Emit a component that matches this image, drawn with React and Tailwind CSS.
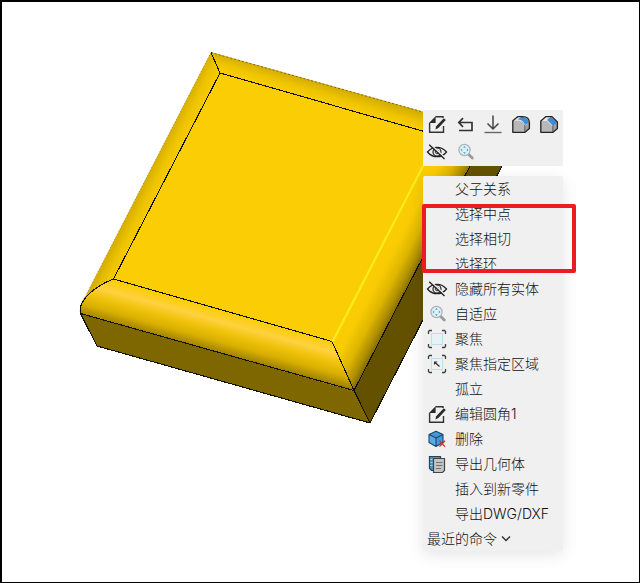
import React, { useState } from 'react';

const Icon = ({ children }) => (
    <svg viewBox="2 2 24 24" className="w-6 h-6 shrink-0" fill="none" aria-hidden="true">
        {children}
    </svg>
);

const EditIcon = () => (
    <Icon>
        <path d="M12.5 6.8H20V8M20.5 16V22.2H6.6V13" stroke="#333" strokeWidth="1.4" />
        <path d="M6 13L12.6 6.2V13Z" fill="#2b2b2b" />
        <path d="M20.8 8.2L22.8 10L15.4 18L12.4 19.4L13.2 16.2Z" fill="#2b2b2b" />
    </Icon>
);

const BackIcon = () => (
    <Icon>
        <path d="M8 20.5H21V12.5H8M12 8.2L7.8 12.5L12 16.8" stroke="#333" strokeWidth="1.7" />
    </Icon>
);

const DownIcon = () => (
    <Icon>
        <path d="M14 5.5V19M8.5 13.5L14 19L19.5 13.5" stroke="#444" strokeWidth="1.5" />
        <path d="M5.5 22.5H22.5" stroke="#666" strokeWidth="1.4" />
    </Icon>
);

const FilletIcon = () => (
    <Icon>
        <path d="M5.8 10.8L11 6.6H15.5C20 6.6 22.4 9 22.4 13V18.5L18 22.3H5.8Z" fill="#e8e8e8" />
        <path d="M5.8 10.8H11C15 10.8 17.8 13 17.8 17V22.3H5.8Z" fill="#b8b8b8" />
        <path d="M17.8 16V22.3L22.3 18.5V12.5Z" fill="#a0a0a0" />
        <path d="M10.500 9.500L14 7C18.500 6.800 21.800 9.500 21.800 13L18 15C17 11.500 14.500 9.500 10.500 9.500Z" fill="#3b8edb" />
        <path d="M5.8 10.8L11 6.6H15.5C20 6.6 22.4 9 22.4 13V18.5L18 22.3H5.8Z" stroke="#222" strokeWidth="1.3" strokeLinejoin="round" />
        <path d="M17.8 22V15" stroke="#444" strokeWidth="0.8" />
    </Icon>
);

const ChamferIcon = () => (
    <Icon>
        <path d="M5.8 11L11 6.6H17L22.4 12V18.5L18 22.3H5.8Z" fill="#e8e8e8" />
        <path d="M5.8 11H12L17.8 16.8V22.3H5.8Z" fill="#b8b8b8" />
        <path d="M17.8 16V22.3L22.3 18.5V12Z" fill="#a0a0a0" />
        <path d="M12.500 9.800L16 7.200L21.500 12.500L18 15.500Z" fill="#3b8edb" stroke="#245789" strokeWidth="0.5" />
        <path d="M5.8 11L11 6.6H17L22.4 12V18.5L18 22.3H5.8Z" stroke="#222" strokeWidth="1.3" strokeLinejoin="round" />
        <path d="M17.8 22V15.5" stroke="#444" strokeWidth="0.8" />
    </Icon>
);

const HideIcon = () => (
    <Icon>
        <path d="M4.5 14C7 11 10 9.3 14 9.3S21 11 23.5 14C21 17 18 18.7 14 18.7S7 17 4.5 14Z" stroke="#222" strokeWidth="1.3" />
        <circle cx="14" cy="14" r="4" stroke="#222" strokeWidth="1.2" />
        <circle cx="14" cy="14" r="1.8" stroke="#333" strokeWidth="0.9" />
        <path d="M7.5 6.2L22.8 20.4" stroke="#f0f0f0" strokeWidth="1.4" />
        <path d="M6.2 6.8L21.5 21" stroke="#222" strokeWidth="1.4" />
    </Icon>
);

const ZoomFitIcon = () => (
    <Icon>
        <path d="M17.2 16L21.3 20" stroke="#9a9a9a" strokeWidth="2.8" strokeLinecap="round" />
        <circle cx="13.5" cy="12" r="5.6" fill="#dcf1fa" stroke="#a9b2b7" strokeWidth="1.2" />
        <path d="M13.500 8L14.900 9.700H12.100ZM13.500 16L12.100 14.300H14.900ZM9.500 12L11.200 10.600V13.400ZM17.500 12L15.800 13.400V10.600Z" fill="#5f9ab5" />
    </Icon>
);

const FocusFrame = () => (
    <>
        <path d="M5.500 9V6.500L6.500 5.500H9M19 5.500H21.500L22.500 6.500V9M22.500 19V21.500L21.500 22.500H19M9 22.500H6.500L5.500 21.500V19" stroke="#3d3d3d" strokeWidth="1.3" />
        <rect x="8.5" y="8.5" width="11" height="11" stroke="#8ccbed" strokeDasharray="1 1" />
    </>
);

const FocusIcon = () => (
    <Icon>
        <FocusFrame />
        <rect x="9" y="9" width="10" height="10" fill="#e8f1f5" />
    </Icon>
);

const FocusAreaIcon = () => (
    <Icon>
        <FocusFrame />
        <path d="M11 11.500H14.500L11 15Z" fill="#333" />
        <path d="M12 12.500L16.500 16.500" stroke="#333" strokeWidth="1.3" />
    </Icon>
);

const DeleteIcon = () => (
    <Icon>
        <path d="M13 6.300L20 9.500V17.500L13 21.500L6 17.500V9.500Z" fill="#4298dc" />
        <path d="M13 13V21.500L6 17.500V9.500Z" fill="#5aaaea" />
        <path d="M13 6.300L20 9.500V17.500L13 21.500L6 17.500V9.500ZM6 9.500L13 13L20 9.500M13 13V21.500" stroke="#1f4564" strokeWidth="1.1" strokeLinejoin="round" />
        <path d="M16.500 15.800L22 21.600M22 15.800L16.500 21.600" stroke="#d92b2b" strokeWidth="1.3" />
    </Icon>
);

const ExportIcon = () => (
    <Icon>
        <path d="M6.500 6.500H17.500V20.500H8.500L6.500 18.500Z" fill="#4a94c6" stroke="#23425a" strokeWidth="1.2" />
        <path d="M7.200 9.500H9.500M7.200 12.500H9.500M7.200 15.500H9.500" stroke="#a7d0ea" />
        <path d="M10.500 8.500H21.500V20.500L19.500 22.500H10.500Z" fill="#c4c4c4" stroke="#444" strokeWidth="1.2" />
        <path d="M13 12.500H19.500M13 15.500H19.500M13 18.500H18" stroke="#6a6a6a" strokeWidth="0.9" />
    </Icon>
);

const tools = [
    { label: '编辑特征', icon: EditIcon },
    { label: '回退', icon: BackIcon },
    { label: '退回到前', icon: DownIcon },
    { label: '圆角', icon: FilletIcon },
    { label: '倒角', icon: ChamferIcon },
    { label: '隐藏', icon: HideIcon },
    { label: '自适应', icon: ZoomFitIcon },
];

const menuItems = [
    { label: '父子关系' },
    { label: '选择中点' },
    { label: '选择相切' },
    { label: '选择环' },
    { label: '隐藏所有实体', icon: HideIcon },
    { label: '自适应', icon: ZoomFitIcon },
    { label: '聚焦', icon: FocusIcon },
    { label: '聚焦指定区域', icon: FocusAreaIcon },
    { label: '孤立' },
    { label: '编辑圆角1', icon: EditIcon },
    { label: '删除', icon: DeleteIcon },
    { label: '导出几何体', icon: ExportIcon },
    { label: '插入到新零件' },
    { label: '导出DWG/DXF' },
];

const Model = () => (
    <svg viewBox="0 0 640 583" className="absolute left-0 top-0 w-[640px] h-[583px]" fill="none" aria-hidden="true">
        <defs>
            <linearGradient id="left" gradientUnits="userSpaceOnUse" x1="146" y1="178" x2="166" y2="188">
                <stop offset="0" stopColor="#d6ae00" />
                <stop offset="0.45" stopColor="#eec400" />
                <stop offset="1" stopColor="#fbcd04" />
            </linearGradient>
            <linearGradient id="back" gradientUnits="userSpaceOnUse" x1="318" y1="83" x2="313" y2="100">
                <stop offset="0" stopColor="#d6ae00" />
                <stop offset="0.5" stopColor="#eec400" />
                <stop offset="1" stopColor="#fbcd04" />
            </linearGradient>
            <linearGradient id="front" gradientUnits="userSpaceOnUse" x1="222" y1="310" x2="211" y2="350">
                <stop offset="0" stopColor="#fbcd04" />
                <stop offset="0.28" stopColor="#ffd140" />
                <stop offset="0.5" stopColor="#f0c30c" />
                <stop offset="0.75" stopColor="#d9b000" />
                <stop offset="1" stopColor="#a08200" />
            </linearGradient>
            <linearGradient id="right" gradientUnits="userSpaceOnUse" x1="380" y1="249" x2="418" y2="269">
                <stop offset="0" stopColor="#fbcd04" />
                <stop offset="0.3" stopColor="#f8cb04" />
                <stop offset="0.6" stopColor="#dfb600" />
                <stop offset="0.85" stopColor="#ad8d00" />
                <stop offset="1" stopColor="#806800" />
            </linearGradient>
        </defs>
        <path d="M80 313L354 391L370 423L97 346Z" fill="#7f6700" />
        <path d="M354 391L495 117L527 117L370 423Z" fill="#645100" />
        <path d="M211 52L220 73L113 279Q88 290 80 308Q80 303 86 295Z" fill="url(#left)" />
        <path d="M211 52L460 122L440 136L220 73Z" fill="url(#back)" />
        <path d="M220 73L440 136L332 341L113 279Z" fill="#fbcd04" />
        <path d="M113 279L332 341L354 391L80 313C78 302 91 288 113 279Z" fill="url(#front)" />
        <path d="M332 341L440 134L494 119L354 391Z" fill="url(#right)" />
        <g stroke="#111100" strokeWidth="1.1" strokeLinejoin="round" shapeRendering="crispEdges">
            <path d="M211 52.5L220 73L113.500 279L332 341.500L354 390.500L370 423L97 346L80.500 313.500L354 390.500L470 166" />
            <path d="M220 73L440 136M113.500 279C91 288 78 302 80.500 313.500M370 423L502 166" />
        </g>
        <path d="M211 52.500L423 112" stroke="#3a3000" strokeDasharray="2 2" strokeWidth="0.6" />
        <path d="M211 52.500L86 295" stroke="#6b5800" strokeWidth="0.5" strokeDasharray="1 2" />
        <path d="M332.500 342L423 166" stroke="#faec19" strokeWidth="2.2" />
    </svg>
);

const App = () => {
    const [isRecentOpen, setIsRecentOpen] = useState(false);

    return (
        <main className="relative h-screen overflow-hidden bg-white border-black border-t-2 border-l-2 border-r border-b font-[Inter,'Noto_Sans_CJK_SC',sans-serif] text-sm font-light text-[#111]">
            <div className="absolute -left-0.5 -top-0.5">
                <Model />

                <div className="absolute left-[423px] top-[110px] w-[140px] bg-[#f0f0f0] grid grid-cols-5">
                    {tools.map(({ label, icon: ToolIcon }) => (
                        <button key={label} aria-label={label} className="w-7 h-7 flex items-center justify-center hover:bg-[#dcdcdc]">
                            <ToolIcon />
                        </button>
                    ))}
                </div>

                <div className="absolute left-[423px] top-[176px] w-[140px] bg-[#f0f0f0] rounded-xs shadow-[0_4px_16px_rgba(0,0,0,0.1)]">
                    {menuItems.map(({ label, icon: ItemIcon }) => (
                        <button key={label} className="w-full h-[25px] flex items-center gap-1 whitespace-nowrap hover:bg-[#dcdcdc]">
                            <span className="w-7 flex justify-center shrink-0">{ItemIcon && <ItemIcon />}</span>
                            <span>{label}</span>
                        </button>
                    ))}
                    <button
                        onClick={() => setIsRecentOpen(!isRecentOpen)}
                        aria-expanded={isRecentOpen}
                        className="w-full h-[25px] flex items-center gap-1 px-1 whitespace-nowrap hover:bg-[#dcdcdc]"
                    >
                        <span>最近的命令</span>
                        <svg viewBox="0 0 10 10" className="w-2.5 h-2.5" fill="none" aria-hidden="true">
                            <path d="M1 2.500L5 6.500L9 2.500" stroke="#333" strokeWidth="1.5" />
                        </svg>
                    </button>
                </div>

                {/* highlight around the selection commands */}
                <div className="absolute left-[422px] top-[204px] w-[154px] h-[69px] border-4 border-[#ed1c24] rounded-xs pointer-events-none" />
            </div>
        </main>
    );
};

export default App;
